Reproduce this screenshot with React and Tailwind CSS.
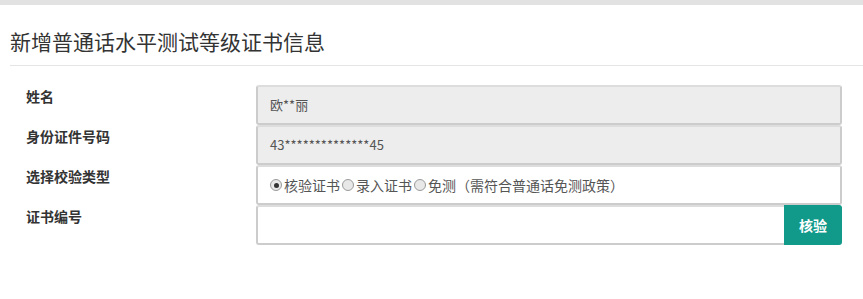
import React from "react";

const font = { fontFamily: '"Microsoft YaHei", "Noto Sans CJK SC", "Noto Sans", sans-serif' };

function Radio({ checked }) {
  return (
    <span className="inline-flex w-[12px] h-[12px] rounded-full border border-[#9a9a9a] bg-[#e8e8e8] items-center justify-center mr-[2px]">
      {checked && <span className="w-[5px] h-[5px] rounded-full bg-[#333]" />}
    </span>
  );
}

function Row({ label, children }) {
  return (
    <div className="flex h-[40px]">
      <div className="w-[256px] pl-[26px] pt-[1px] text-[14px] leading-[20px] font-bold text-[#333]">{label}</div>
      <div className="flex-1 flex">{children}</div>
    </div>
  );
}

export default function App() {
  return (
    <div className="w-[863px] h-[299px] bg-white" style={font}>
      <div className="h-[5px] bg-[#e2e2e2]" />
      <div className="pl-[10px] pt-[23px] pb-[11px] text-[21px] text-[#333] leading-[26px]">
        新增普通话水平测试等级证书信息
      </div>
      <div className="ml-[10px] h-[1px] bg-[#e5e5e5]" />
      <div className="pt-[19px] pr-[21px] flex flex-col">
        <Row label="姓名">
          <div className="flex-1 h-[40px] border-2 border-[#ccc] border-t-[#ddd] rounded-[3px] bg-[#ededed] flex items-center pl-[12px] text-[13px] text-[#555]">
            欧**丽
          </div>
        </Row>
        <Row label="身份证件号码">
          <div className="flex-1 h-[40px] border-2 border-[#ccc] border-t-[#ddd] rounded-[3px] bg-[#ededed] flex items-center pl-[12px] text-[13px] text-[#555]">
            43**************45
          </div>
        </Row>
        <Row label="选择校验类型">
          <div className="flex-1 h-[40px] border-2 border-[#ccc] border-t-[#ddd] rounded-[3px] bg-white flex items-center pl-[12px] text-[14px] text-[#555]">
            <Radio checked />核验证书
            <span className="ml-[2px]" />
            <Radio />录入证书
            <span className="ml-[2px]" />
            <Radio />免测（需符合普通话免测政策）
          </div>
        </Row>
        <Row label="证书编号">
          <div className="flex-1 h-[40px] border-2 border-[#ccc] border-t-[#ddd] rounded-l-[3px] border-r-0 bg-white" />
          <button className="w-[58px] h-[40px] bg-[#11998a] text-white text-[14px] font-bold rounded-r-[3px]">
            核验
          </button>
        </Row>
      </div>
    </div>
  );
}
